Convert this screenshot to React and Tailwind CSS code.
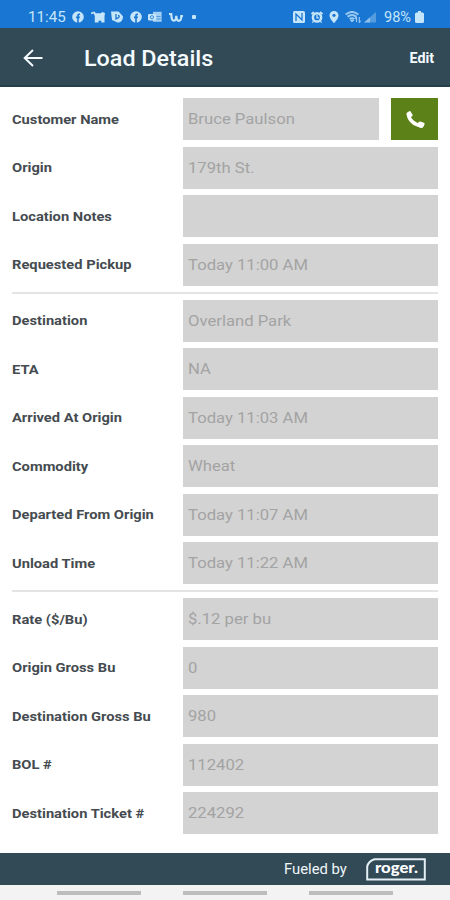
import React from "react";

const groups = [
  [
    ["Customer Name", "Bruce Paulson", true],
    ["Origin", "179th St."],
    ["Location Notes", ""],
    ["Requested Pickup", "Today 11:00 AM"],
  ],
  [
    ["Destination", "Overland Park"],
    ["ETA", "NA"],
    ["Arrived At Origin", "Today 11:03 AM"],
    ["Commodity", "Wheat"],
    ["Departed From Origin", "Today 11:07 AM"],
    ["Unload Time", "Today 11:22 AM"],
  ],
  [
    ["Rate ($/Bu)", "$.12 per bu"],
    ["Origin Gross Bu", "0"],
    ["Destination Gross Bu", "980"],
    ["BOL #", "112402"],
    ["Destination Ticket #", "224292"],
  ],
];

function Facebook() {
  return (
    <svg className="h-3 w-3" viewBox="0 0 12 12">
      <circle cx="6" cy="6" r="5.8" fill="currentColor" />
      <path d="M5.2 12V7.3H4V5.6h1.2V4.5c0-1.5.9-2.2 2.8-1.9v1.5c-.9-.1-1.2.2-1.2.7v.8H8L7.7 7.3h-.9V12" fill="#1976d2" />
    </svg>
  );
}

function StatusBar() {
  return (
    <div className="flex h-[28px] items-center bg-[#1976d2] pt-[6px] pl-[28px] text-[#c5e6fa]">
      <span className="w-[44px] text-[14px] leading-none whitespace-nowrap">
        <span className="inline-block origin-left scale-x-[1.08]">11:45</span>
      </span>
      <div className="flex items-center gap-[6.6px]">
        <Facebook />
        <svg className="h-3 w-[14px]" viewBox="0 0 14 12" fill="currentColor">
          <path d="M0 1.5 3.4.5l1.4 1.7H10l1.1-1.1 2.9.8-.5 3.4v6.2h-3.2V9.8H7.5v1.7H3.8V5L2.6 2.6.3 3.2Z" />
        </svg>
        <svg className="h-3 w-3" viewBox="0 0 12 12">
          <path d="M0 .5h7.5L12 5.2c0 4-2.2 6.4-5.5 6.4L1 9Z" fill="currentColor" />
          <path d="M5 3v5l2-1.1c1.6-.6 1.6-2.6 0-2.5" fill="none" stroke="#1976d2" strokeWidth="1.3" />
        </svg>
        <Facebook />
        <svg className="h-3 w-[14px]" viewBox="0 0 14 12" fill="currentColor">
          <path d="M5 .8h8.6v10H5Z" opacity=".8" />
          <rect y="3" width="8" height="6.5" rx="1" />
          <path d="M8.5 5.5h4M8.5 8h4" stroke="#1976d2" strokeWidth=".6" />
          <circle cx="4" cy="6.2" r="1.6" fill="none" stroke="#1976d2" strokeWidth=".8" />
        </svg>
        <svg className="h-3 w-[14px]" viewBox="0 0 14 12" fill="none" stroke="currentColor" strokeWidth="2.2">
          <path d="M0 3h2.2l.5 4c.3 3.3 3.5 3.4 4.2.4l.4-2.4.4 2.7c.5 3 3.8 2.6 4.3 0l.3-2.7H14" />
        </svg>
      </div>
      <span className="ml-[6px] flex w-[11px] justify-center">
        <span className="h-[4px] w-[4px] rounded-[1px] bg-current" />
      </span>
      <div className="ml-[93px] flex items-center gap-[6px]">
        <svg className="h-3 w-3" viewBox="0 0 12 12">
          <rect width="12" height="12" rx="1.5" fill="currentColor" />
          <path d="M3 10V3l6 6V2" fill="none" stroke="#1976d2" strokeWidth="1.3" />
        </svg>
        <svg className="h-3 w-3" viewBox="0 0 12 12">
          <path d="m.5 3 2.5-2M11.5 3 9 1" stroke="currentColor" strokeWidth="1.8" />
          <circle cx="6" cy="6.4" r="4.1" fill="none" stroke="currentColor" strokeWidth="2.5" />
          <path d="M6 4v2.8h1.8M2.5 10 1.5 11.7M9.5 10l1 1.7" fill="none" stroke="currentColor" strokeWidth="1.2" />
        </svg>
        <svg className="h-3 w-[10px]" viewBox="0 0 9 12">
          <path d="M4.5 0C2 0 0 2 0 4.4 0 7.8 4.5 12 4.5 12S9 7.8 9 4.4C9 2 7 0 4.5 0Z" fill="currentColor" />
          <circle cx="4.5" cy="4.3" r="1.6" fill="#1976d2" />
        </svg>
        <svg className="h-3 w-4" viewBox="0 0 16 12" fill="none" stroke="currentColor" opacity=".75">
          <path d="M.7 3.5C4.7.2 9.3.2 13.3 3.5M2.5 5.8c2.8-2.2 6.2-2.2 9 0M4.6 8c1.6-1.2 3.2-1.2 4.8 0" strokeWidth="1.9" />
          <path d="m5.5 9 1.5 2L9 9Z" fill="currentColor" />
          <path d="M11.5 11V6M10 7.5 11.5 6M14.3 6v5.3l1.4-1.5" strokeWidth="1.2" />
        </svg>
        <svg className="-ml-[3px] h-3 w-3" viewBox="0 0 12 12" fill="currentColor">
          <path d="M0 11.5 12 1v10.5Z" opacity=".35" />
          <path d="M0 11.5 6 6.2v5.3Z" opacity=".5" />
        </svg>
      </div>
      <span className="ml-[8px] w-[31px] text-[14px] leading-none whitespace-nowrap">
        <span className="inline-block origin-left scale-x-[1.04]">98%</span>
      </span>
      <svg className="h-3 w-[9px]" viewBox="0 0 9 12" fill="currentColor">
        <path d="M3 0h3v1.5h1.5Q9 1.5 9 3v7.5Q9 12 7.5 12h-6Q0 12 0 10.5V3Q0 1.5 1.5 1.5H3Z" />
      </svg>
    </div>
  );
}

function Row({ label, value, phone }) {
  return (
    <div className="flex h-[42px] items-center">
      <div className="w-[171px] pt-[1px] text-[13px] font-bold whitespace-nowrap text-[#454b50]">
        <span className="inline-block origin-left scale-x-[1.13]">{label}</span>
      </div>
      <div className="flex h-full flex-1 items-center bg-[#d3d3d3] pt-[1px] pl-[5px] text-[15px] whitespace-nowrap text-[#a3a3a3]">
        <span className="inline-block origin-left scale-x-[1.11]">{value}</span>
      </div>
      {phone && (
        <button className="ml-[12px] flex h-full w-[47px] items-center justify-center bg-[#5b8118]">
          <svg className="h-[19px] w-[20px]" viewBox="0 0 20 19">
            <path d="M3.5 4.5C4 10 9.5 15 16 15.5" fill="none" stroke="#fff" strokeWidth="3.6" />
            <path d="M1.9 2.7 4.2 1.2q1-.5 1.6.5l1.7 3q.5 1-.4 1.6L4.6 8Q3 8 1.5 4.6 1.2 3.3 1.9 2.7ZM12.6 14.2l1-2.1q.6-1 1.7-.6l3.6 1.2q1.1.5.7 1.5l-1.2 2.5q-.6 1.2-2 1.2-3.4-.2-3.8-3.7Z" fill="#fff" />
          </svg>
        </button>
      )}
    </div>
  );
}

export default function App() {
  return (
    <div className="flex h-[900px] w-[450px] flex-col overflow-hidden bg-white font-['Roboto',sans-serif]">
      <StatusBar />
      <header className="flex h-[59px] items-center border-b-2 border-[#25404a] bg-[#324956] pt-[2px] pr-[16px] pl-[23px] text-[#f4fbff]">
        <svg className="h-[18px] w-[20px]" viewBox="0 0 20 18" fill="none" stroke="currentColor" strokeWidth="2">
          <path d="M10 1 1.7 9l8.3 8M1.7 9H19.5" />
        </svg>
        <h1 className="ml-[41px] flex-1 pt-[2px] text-[22px] font-medium whitespace-nowrap">
          <span className="inline-block origin-left scale-x-[1.06]">Load Details</span>
        </h1>
        <span className="pt-[2px] text-[14px] font-bold">
          <span className="inline-block origin-right scale-x-[1.02]">Edit</span>
        </span>
      </header>
      <main className="flex-1 px-[12px] pt-[11px]">
        {groups.map((rows, g) => (
          <section key={g}>
            {g > 0 && <div className="mt-[6px] mb-[6px] h-[2px] bg-[#e4e4e4]" />}
            <div className="flex flex-col gap-[6.5px]">
              {rows.map(([label, value, phone]) => (
                <Row key={label} label={label} value={value} phone={phone} />
              ))}
            </div>
          </section>
        ))}
      </main>
      <footer className="flex h-[32px] items-center bg-[#324956] pl-[284px] text-[#f0f7fa]">
        <span className="w-[82px] pt-[1px] text-[14px] whitespace-nowrap">
          <span className="inline-block origin-left scale-x-[1.06]">Fueled by</span>
        </span>
        <svg className="h-[23px] w-[60px]" viewBox="0 0 60 23">
          <path d="M8.5 1.2H58.8V21.5H1.2V8.5Q2.5 3 8.5 1.2Z" fill="none" stroke="#e3eff4" strokeWidth="2" />
          <text x="9" y="15" textLength="43" lengthAdjust="spacingAndGlyphs" fill="#fff" fontFamily="Lato, sans-serif" fontWeight="900" fontSize="15">roger.</text>
        </svg>
      </footer>
      <div className="flex h-[15px] items-start justify-center gap-[42px] bg-[#f3f3f3] pt-[6px]">
        <span className="h-[4px] w-[84px] bg-[#bdbdbd]" />
        <span className="h-[4px] w-[84px] bg-[#bdbdbd]" />
        <span className="h-[4px] w-[84px] bg-[#bdbdbd]" />
      </div>
    </div>
  );
}
